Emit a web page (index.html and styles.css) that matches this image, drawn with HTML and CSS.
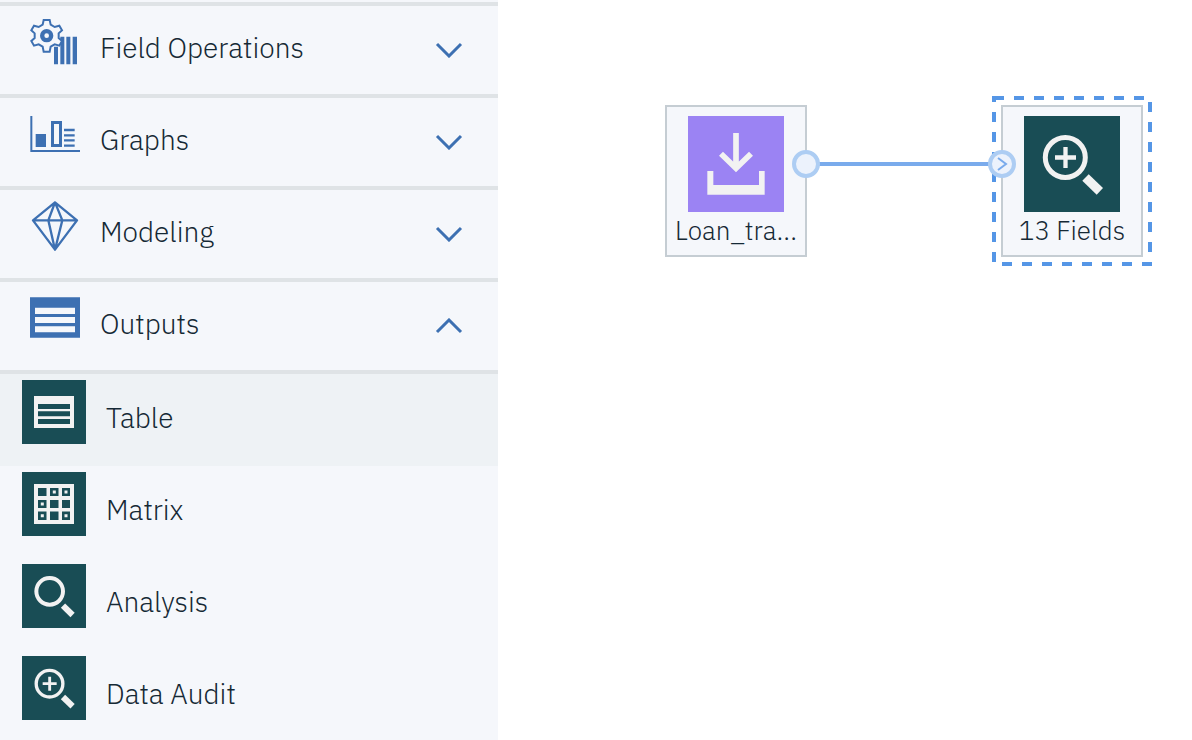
FILE: index.html
```html
<!DOCTYPE html>
<html lang="en">
<head>
<meta charset="utf-8">
<title>Flow editor</title>
<link rel="stylesheet" href="styles.css">
</head>
<body>
<svg class="defs" aria-hidden="true">
  <symbol id="audit" viewBox="0 0 96 96">
    <circle cx="41.3" cy="41.5" r="20" fill="none" stroke="#f2f2f2" stroke-width="5"/>
    <path d="M31 41.5h21M41.5 31v21" stroke="#f2f2f2" stroke-width="4.3"/>
    <path d="M64.7 58.3 79 72l-6.3 6.7-14.4-14z" fill="#f2f2f2"/>
  </symbol>
  <symbol id="chevron" viewBox="0 0 28 16">
    <path d="M2 2l12 12L26 2" fill="none" stroke="#3d70b2" stroke-width="3"/>
  </symbol>
</svg>
<div class="editor">
  <nav class="palette" aria-label="Node palette">
    <button class="category" aria-expanded="false">
      <svg class="category-icon" viewBox="90 51 150 150" aria-hidden="true">
        <path d="M162 140h12v53h-12zM181 110h12v83h-12zM199 110h12v83h-12zM218 110h13v83h-13z" fill="#3d70b2"/>
        <path d="M131 60h18l3 14 12 7 14-4 8 14-10 9v14l10 9-8 14-14-4-12 7-3 15h-18l-3-15-12-7-14 4-8-14 10-9v-14l-10-9 8-14 14 4 12-7z" fill="#f5f7fb" stroke="#3d70b2" stroke-width="6"/>
        <circle cx="140" cy="107" r="13.500" fill="none" stroke="#3d70b2" stroke-width="13"/>
      </svg>
      <span class="category-name">Field Operations</span>
      <svg class="chevron" aria-hidden="true"><use href="#chevron"/></svg>
    </button>
    <button class="category" aria-expanded="false">
      <svg class="category-icon" viewBox="90 42 150 150" aria-hidden="true">
        <path d="M94 63v105h146" fill="none" stroke="#3d70b2" stroke-width="6"/>
        <path d="M107 117h31v39h-31z" fill="#3d70b2"/>
        <path d="M157.500 82.500h24v69h-24z" fill="none" stroke="#3d70b2" stroke-width="9"/>
        <path d="M192 105h32M192 121h32M192 136h32M192 152h32" stroke="#3d70b2" stroke-width="7"/>
      </svg>
      <span class="category-name">Graphs</span>
      <svg class="chevron" aria-hidden="true"><use href="#chevron"/></svg>
    </button>
    <button class="category" aria-expanded="false">
      <svg class="category-icon" viewBox="90 48 150 150" aria-hidden="true">
        <path d="M165 52l66 54-66 88-66-88zM99 106h132M165 52l-20 54 20 88 22-88z" fill="none" stroke="#3d70b2" stroke-width="7" stroke-linejoin="round"/>
      </svg>
      <span class="category-name">Modeling</span>
      <svg class="chevron" aria-hidden="true"><use href="#chevron"/></svg>
    </button>
    <button class="category" aria-expanded="true" aria-controls="outputs">
      <svg class="category-icon" viewBox="90 39 150 150" aria-hidden="true">
        <path d="M90 52h150v121H90zM105 83v19h120V83zM105 111v18h120v-18zM105 139v18h120v-18z" fill="#3d70b2" fill-rule="evenodd"/>
      </svg>
      <span class="category-name">Outputs</span>
      <svg class="chevron" aria-hidden="true"><use href="#chevron"/></svg>
    </button>
    <ul class="items" id="outputs">
      <li><button class="item item-active">
        <svg class="tile" viewBox="0 0 64 64" aria-hidden="true">
          <path d="M12 16h40v32H12zM16 24v5h32v-5zM16 31.300v5h32v-5zM16 39v5h32v-5z" fill="#f2f2f2" fill-rule="evenodd"/>
        </svg>
        <span>Table</span>
      </button></li>
      <li><button class="item">
        <svg class="tile" viewBox="0 0 64 64" aria-hidden="true">
          <path d="M12 12h40v40H12zM16 16v8h8.500v-8zM28 16v8h8.500v-8zM40 16v8h8v-8zM16 28v8h8.500v-8zM28 28v8h8.500v-8zM40 28v8h8v-8zM16 39.500v8.500h8.500v-8.500zM28 39.500v8.500h8.500v-8.500zM40 39.500v8.500h8v-8.500z" fill="#f2f2f2" fill-rule="evenodd"/>
          <path d="M30.800 18.500h3v3h-3zM42.500 18.500h3v3h-3zM18.800 30.500h3v3h-3zM18.800 42.300h3v3h-3zM42.500 42.300h3v3h-3z" fill="#f2f2f2"/>
        </svg>
        <span>Matrix</span>
      </button></li>
      <li><button class="item">
        <svg class="tile" viewBox="0 0 96 96" aria-hidden="true">
          <circle cx="41.500" cy="41" r="20" fill="none" stroke="#f2f2f2" stroke-width="6"/>
          <path d="M64.700 59.300 79 73l-6.300 6.700-14.400-14z" fill="#f2f2f2"/>
        </svg>
        <span>Analysis</span>
      </button></li>
      <li><button class="item">
        <svg class="tile" aria-hidden="true"><use href="#audit"/></svg>
        <span>Data Audit</span>
      </button></li>
    </ul>
  </nav>
  <main class="canvas" aria-label="Flow canvas">
    <button class="node node-source">
      <svg class="node-icon node-icon-import" viewBox="114 78 288 288" aria-hidden="true">
        <path d="M258 129v104M213 191l45 44 45-44" fill="none" stroke="#f2f2f2" stroke-width="17"/>
        <path d="M172 243h18v42h137v-42h17v71H172z" fill="#f2f2f2"/>
      </svg>
      <span>Loan_tra...</span>
    </button>
    <button class="node node-output">
      <svg class="node-icon" aria-hidden="true"><use href="#audit"/></svg>
      <span>13 Fields</span>
    </button>
    <svg class="links" aria-hidden="true">
      <rect x="496" y="98" width="156" height="166" fill="none" stroke="#5596e6" stroke-width="4" stroke-dasharray="10 10"/>
      <path d="M320 164h172" stroke="#7aabec" stroke-width="4"/>
      <circle cx="308" cy="164" r="12" fill="#ecf2fc" stroke="#adcdf3" stroke-width="4"/>
      <circle cx="504" cy="164" r="12" fill="#ecf2fc" stroke="#adcdf3" stroke-width="4"/>
      <path d="M500 158l8 6-8 6" fill="none" stroke="#78aaec" stroke-width="2"/>
    </svg>
  </main>
</div>
</body>
</html>
```
FILE: styles.css
```css
* {
  box-sizing: border-box;
}

body {
  margin: 0;
  background: #fff;
  color: #152935;
  font-family: "IBM Plex Sans", Roboto, "Liberation Sans", sans-serif;
  font-size: 28px;
  font-weight: 300;
  line-height: 36px;
}

button {
  margin: 0;
  border: 0;
  background: none;
  color: inherit;
  font: inherit;
  text-align: left;
  cursor: pointer;
}

.defs {
  display: none;
}

.editor {
  display: flex;
  min-height: 100vh;
}

.palette {
  flex: 0 0 498px;
  padding-top: 2px;
  background: #f5f7fb;
}

.category {
  display: flex;
  align-items: center;
  gap: 20px;
  width: 100%;
  height: 92px;
  padding: 0 35px 4px 30px;
  border-top: 4px solid #dfe3e6;
}

.category-icon {
  flex: none;
  width: 50px;
  height: 50px;
  margin-bottom: 12px;
}

.category-name {
  flex: 1;
}

.chevron {
  width: 28px;
  height: 16px;
  margin-top: 4px;
}

.category[aria-expanded="true"] .chevron {
  transform: rotate(180deg);
}

.items {
  margin: 0;
  padding: 0;
  border-top: 4px solid #dfe3e6;
  list-style: none;
}

.item {
  display: flex;
  align-items: flex-start;
  gap: 20px;
  width: 100%;
  height: 92px;
  padding: 6px 22px;
}

.item span {
  padding-top: 20px;
}

.item-active {
  background: #eef2f5;
}

.tile {
  flex: none;
  width: 64px;
  height: 64px;
  background: #194d55;
}

.canvas {
  position: relative;
  flex: 1;
  min-width: 0;
}

.node {
  position: absolute;
  top: 105px;
  display: flex;
  flex-direction: column;
  align-items: center;
  width: 142px;
  height: 152px;
  padding: 9px 0 0;
  border: 2px solid #c5cdd3;
  background: #f5f7fb;
  font-size: 26px;
  white-space: nowrap;
}

.node-source {
  left: 167px;
}

.node-output {
  left: 503px;
}

.node-icon {
  flex: none;
  width: 96px;
  height: 96px;
  background: #194d55;
}

.node-icon-import {
  background: #9b83f3;
}

.links {
  position: absolute;
  inset: 0;
  width: 100%;
  height: 100%;
  pointer-events: none;
}
```
